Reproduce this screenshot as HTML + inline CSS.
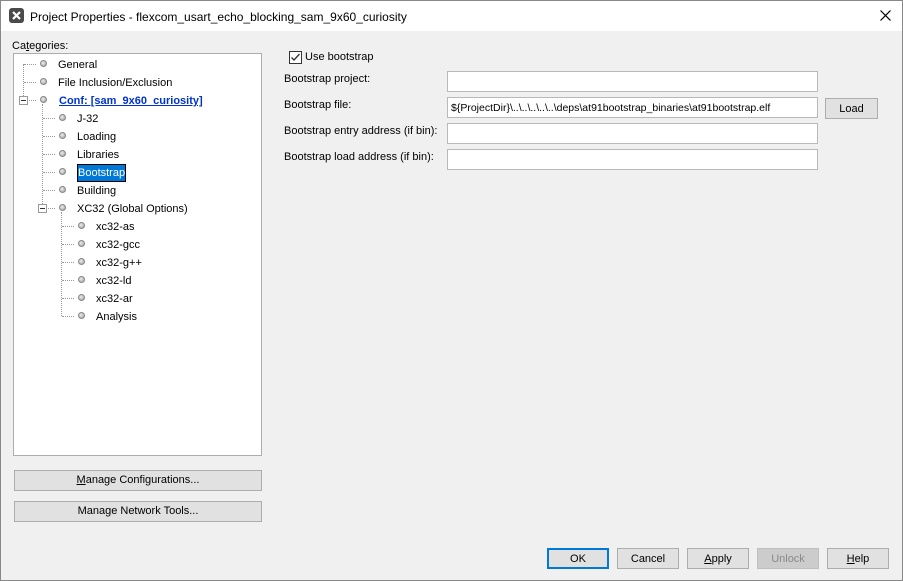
<!DOCTYPE html>
<html><head><style>
*{box-sizing:border-box;margin:0;padding:0}
body{width:903px;height:581px;background:#f0f0f0;font-family:"Liberation Sans",sans-serif;font-size:11px;color:#000;position:relative;overflow:hidden}
.frame{position:absolute;left:0;top:0;width:903px;height:581px;border:1px solid #888;pointer-events:none}
.a{position:absolute;white-space:nowrap}
.title{position:absolute;left:0;top:0;width:903px;height:31px;background:#fff}
.tree{position:absolute;left:13px;top:53px;width:249px;height:403px;background:#fff;border:1px solid #adadad}
.tree .a{margin-top:1px}
.dot{position:absolute;width:7px;height:7px;border-radius:50%;background:radial-gradient(circle at 40% 40%,#eee,#999);border:1px solid #888}
.btn{position:absolute;background:#e1e1e1;border:1px solid #adadad;text-align:center;line-height:21px}
.inp{position:absolute;left:447px;width:371px;height:21px;background:#fff;border:1px solid #b9b9b9;padding-left:3px;line-height:20px}
.hl{position:absolute;border-top:1px dotted #999;width:12px}
.vl{position:absolute;border-left:1px dotted #999}
.box{position:absolute;width:9px;height:9px;border:1px solid #999;background:#fff}
.box:after{content:"";position:absolute;left:1px;top:3px;width:5px;border-top:1px solid #333}
</style></head><body>
<div class="title">
<svg class="a" style="left:9px;top:8px" width="15" height="15" viewBox="0 0 15 15"><rect width="15" height="15" rx="3" fill="#4a4a4a"/><path d="M4 4L11 11M11 4L4 11" stroke="#fff" stroke-width="2.2"/></svg>
<div class="a" style="left:30px;top:10px;font-size:12px">Project Properties - flexcom_usart_echo_blocking_sam_9x60_curiosity</div>
<svg class="a" style="left:880px;top:10px" width="11" height="11"><path d="M0.5 0.5L10.5 10.5M10.5 0.5L0.5 10.5" stroke="#000" stroke-width="1.2"/></svg>
</div>
<div class="a" style="left:12px;top:40px">Ca<u>t</u>egories:</div>
<div class="tree">
<div class="vl" style="left:9px;top:10px;height:36px"></div>
<div class="vl" style="left:28px;top:50px;height:104px"></div>
<div class="vl" style="left:47px;top:158px;height:104px"></div>
<div class="hl" style="left:10px;top:10px"></div><div class="dot" style="left:26px;top:6px"></div><div class="a" style="left:44px;top:4px">General</div>
<div class="hl" style="left:10px;top:28px"></div><div class="dot" style="left:26px;top:24px"></div><div class="a" style="left:44px;top:22px">File Inclusion/Exclusion</div>
<div class="hl" style="left:10px;top:46px"></div><div class="box" style="left:5px;top:42px"></div><div class="dot" style="left:26px;top:42px"></div><div class="a" style="left:45px;top:40px;color:#0033cc;font-weight:bold;text-decoration:underline">Conf: [sam_9x60_curiosity]</div>
<div class="hl" style="left:29px;top:64px"></div><div class="dot" style="left:45px;top:60px"></div><div class="a" style="left:63px;top:58px">J-32</div>
<div class="hl" style="left:29px;top:82px"></div><div class="dot" style="left:45px;top:78px"></div><div class="a" style="left:63px;top:76px">Loading</div>
<div class="hl" style="left:29px;top:100px"></div><div class="dot" style="left:45px;top:96px"></div><div class="a" style="left:63px;top:94px">Libraries</div>
<div class="hl" style="left:29px;top:118px"></div><div class="dot" style="left:45px;top:114px"></div><div class="a" style="left:63px;top:109px;background:#0078d7;color:#fff;border:1px solid #000;padding:1px 0;height:18px;line-height:15px">Bootstrap</div>
<div class="hl" style="left:29px;top:136px"></div><div class="dot" style="left:45px;top:132px"></div><div class="a" style="left:63px;top:130px">Building</div>
<div class="hl" style="left:29px;top:154px"></div><div class="box" style="left:24px;top:150px"></div><div class="dot" style="left:45px;top:150px"></div><div class="a" style="left:63px;top:148px">XC32 (Global Options)</div>
<div class="hl" style="left:48px;top:172px"></div><div class="dot" style="left:64px;top:168px"></div><div class="a" style="left:82px;top:166px">xc32-as</div>
<div class="hl" style="left:48px;top:190px"></div><div class="dot" style="left:64px;top:186px"></div><div class="a" style="left:82px;top:184px">xc32-gcc</div>
<div class="hl" style="left:48px;top:208px"></div><div class="dot" style="left:64px;top:204px"></div><div class="a" style="left:82px;top:202px">xc32-g++</div>
<div class="hl" style="left:48px;top:226px"></div><div class="dot" style="left:64px;top:222px"></div><div class="a" style="left:82px;top:220px">xc32-ld</div>
<div class="hl" style="left:48px;top:244px"></div><div class="dot" style="left:64px;top:240px"></div><div class="a" style="left:82px;top:238px">xc32-ar</div>
<div class="hl" style="left:48px;top:262px"></div><div class="dot" style="left:64px;top:258px"></div><div class="a" style="left:82px;top:256px">Analysis</div>
</div>
<div class="btn" style="left:14px;top:470px;width:248px;height:21px;line-height:19px"><u>M</u>anage Configurations...</div>
<div class="btn" style="left:14px;top:501px;width:248px;height:21px;line-height:19px">Manage Network Tools...</div>
<svg class="a" style="left:289px;top:51px" width="13" height="13"><rect x="0.5" y="0.5" width="12" height="12" fill="#fff" stroke="#333"/><path d="M2.5 6.5L5 9L10.5 3" stroke="#333" stroke-width="1.3" fill="none"/></svg>
<div class="a" style="left:305px;top:51px">Use bootstrap</div>
<div class="a" style="left:284px;top:73px">Bootstrap project:</div>
<div class="a" style="left:284px;top:99px">Bootstrap file:</div>
<div class="a" style="left:284px;top:125px">Bootstrap entry address (if bin):</div>
<div class="a" style="left:284px;top:151px">Bootstrap load address (if bin):</div>
<div class="inp" style="top:71px"></div>
<div class="inp" style="top:97px;font-size:10.5px">${ProjectDir}\..\..\..\..\..\deps\at91bootstrap_binaries\at91bootstrap.elf</div>
<div class="inp" style="top:123px"></div>
<div class="inp" style="top:149px"></div>
<div class="btn" style="left:825px;top:98px;width:53px;height:21px">Load</div>
<div class="btn" style="left:547px;top:548px;width:62px;height:21px;border:2px solid #0078d7;line-height:19px">OK</div>
<div class="btn" style="left:617px;top:548px;width:62px;height:21px">Cancel</div>
<div class="btn" style="left:687px;top:548px;width:62px;height:21px"><u>A</u>pply</div>
<div class="btn" style="left:757px;top:548px;width:62px;height:21px;background:#ccc;border-color:#bfbfbf;color:#8a8a8a">Unlock</div>
<div class="btn" style="left:827px;top:548px;width:62px;height:21px"><u>H</u>elp</div>
<div class="frame"></div>
</body></html>
